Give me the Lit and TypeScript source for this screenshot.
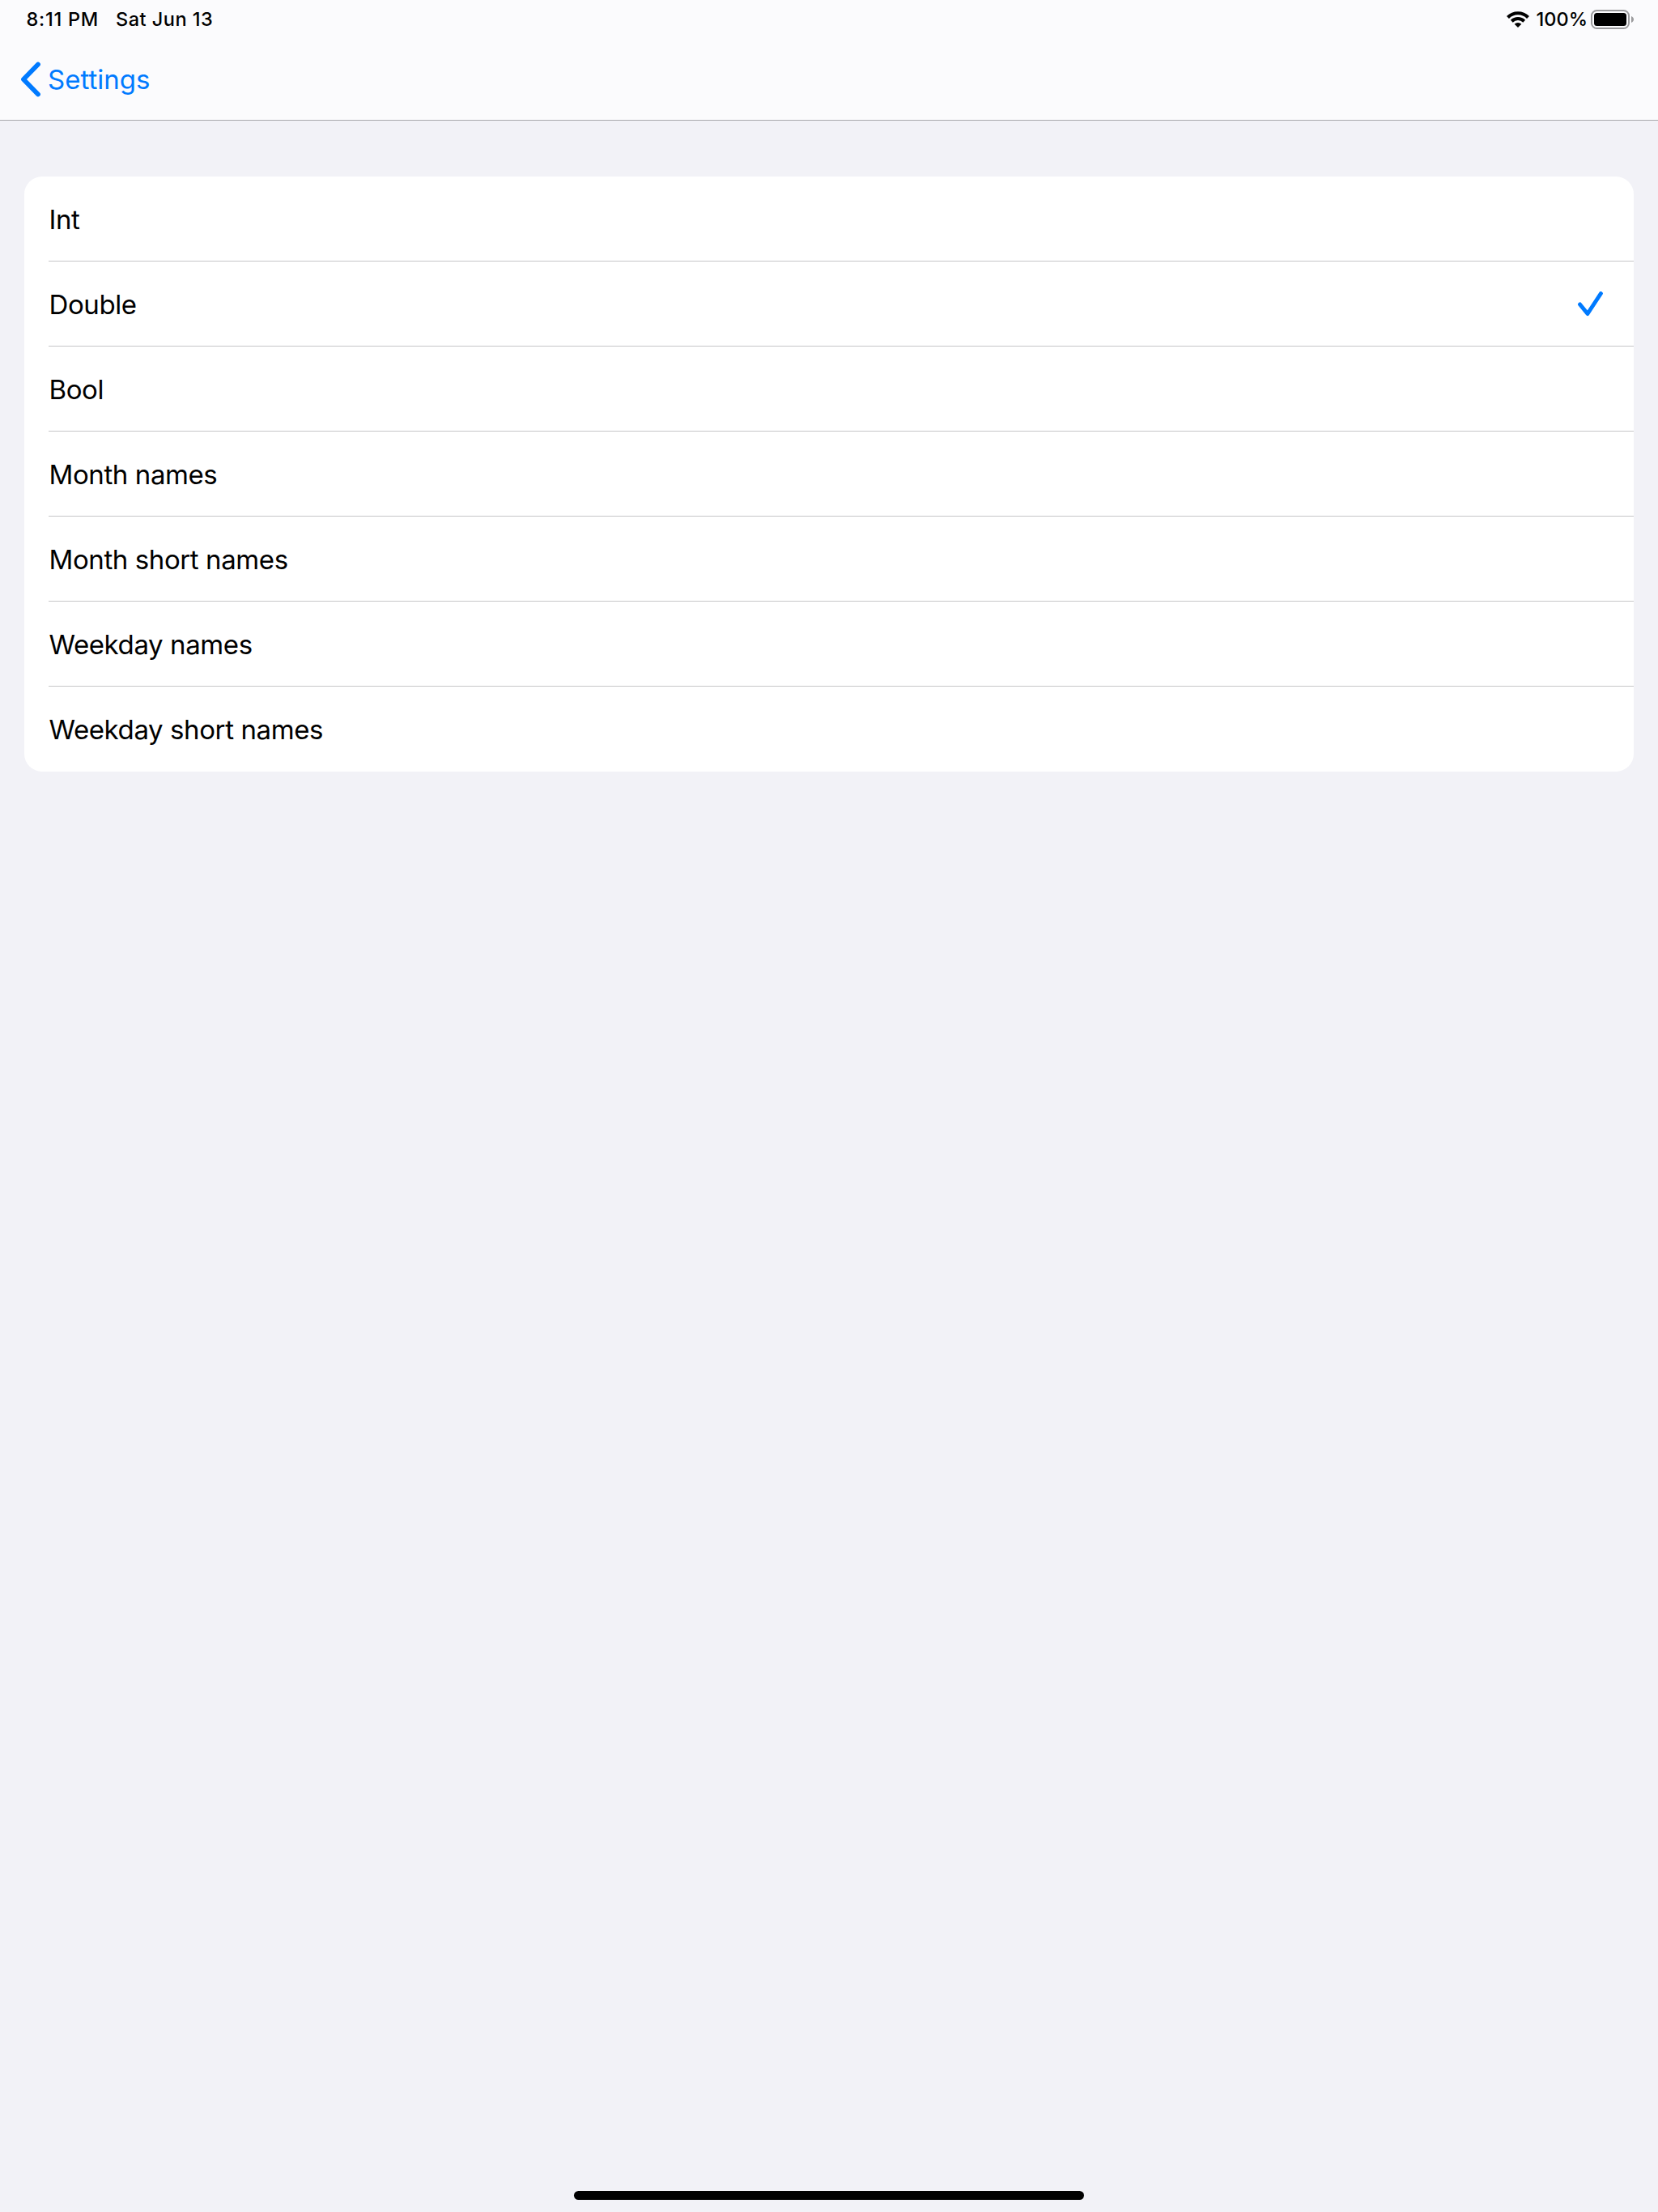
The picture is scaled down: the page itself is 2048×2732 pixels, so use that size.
import { LitElement, html, css, svg } from 'lit';
import { customElement, property, state } from 'lit/decorators.js';

@customElement('status-bar')
export class StatusBar extends LitElement {
  static styles = css`
    :host {
      display: flex;
      justify-content: space-between;
      align-items: center;
      height: 48px;
      padding: 0 30px 0 32.5px;
      box-sizing: border-box;
      font-size: 23.5px;
      font-weight: 500;
      color: #000;
    }

    .group {
      display: flex;
      align-items: center;
      white-space: nowrap;
    }

    span {
      padding-bottom: 2px;
    }

    .time {
      letter-spacing: 0.75px;
    }

    .date {
      margin-left: 21px;
      letter-spacing: 0.5px;
    }

    .percent {
      margin: 0 4px 0 9px;
    }

    svg {
      display: block;
    }
  `;

  render() {
    return html`
      <div class="group">
        <span class="time">8:11 PM</span>
        <span class="date">Sat Jun 13</span>
      </div>
      <div class="group">
        <svg width="28" height="20" viewBox="0 0 28 20">
          <path d="M1.5 7.4a17.8 17.8 0 0 1 25 0" fill="none" stroke="#000" stroke-width="4.2" />
          <path d="M6.3 12.2a11 11 0 0 1 15.4 0" fill="none" stroke="#000" stroke-width="4" />
          <path d="M14 20l-4.3-4.3a6.2 6.2 0 0 1 8.6 0z" />
        </svg>
        <span class="percent">100%</span>
        <svg width="53" height="24" viewBox="0 0 53 24">
          <rect x="1" y="1" width="46" height="22" rx="6.5" fill="none" stroke="#9b9b9d" stroke-width="2" />
          <rect x="4" y="4" width="40" height="16" rx="3.5" />
          <path d="M50 8c4 1.6 4 6.4 0 8z" fill="#9b9b9d" />
        </svg>
      </div>
    `;
  }
}

@customElement('option-row')
export class OptionRow extends LitElement {
  @property() label = '';
  @property({ type: Boolean }) selected = false;

  static styles = css`
    :host {
      display: block;
      padding-left: 30px;
      cursor: pointer;
    }

    .row {
      display: flex;
      align-items: center;
      justify-content: space-between;
      height: 105px;
      padding: 2px 37px 0 0.5px;
      box-sizing: border-box;
      border-bottom: 1px solid #c6c6c8;
      font-size: 33px;
      letter-spacing: -0.4px;
    }

    :host(:last-of-type) .row {
      border-bottom-color: transparent;
    }
  `;

  render() {
    const check = svg`
      <svg width="33" height="32" viewBox="0 0 33 32">
        <path d="M3.6 16l9.4 11.500L29.400 2.500" fill="none" stroke="#007aff" stroke-width="5"
          stroke-linecap="round" stroke-linejoin="round" />
      </svg>`;
    return html`
      <div class="row">
        <span>${this.label}</span>
        ${this.selected ? check : ''}
      </div>
    `;
  }
}

@customElement('app-root')
export class AppRoot extends LitElement {
  @state() selected = 'Double';

  options = [
    'Int',
    'Double',
    'Bool',
    'Month names',
    'Month short names',
    'Weekday names',
    'Weekday short names',
  ];

  static styles = css`
    :host {
      display: flex;
      flex-direction: column;
      height: 100vh;
      background: #f2f2f7;
      font-family: Inter, 'Liberation Sans', sans-serif;
      color: #000;
    }

    header {
      height: 149px;
      box-sizing: border-box;
      background: #fbfbfd;
      border-bottom: 1px solid #a9a9ac;
    }

    .back {
      display: flex;
      align-items: center;
      gap: 9px;
      height: 100px;
      padding-left: 24px;
      font-size: 33px;
      color: #007aff;
    }

    .list {
      margin: 69px 30px 0;
      background: #fff;
      border-radius: 22px;
      overflow: hidden;
    }

    .home {
      width: 630px;
      height: 11px;
      margin: auto auto 15px;
      border-radius: 6px;
      background: #000;
    }
  `;

  render() {
    return html`
      <header>
        <status-bar></status-bar>
        <div class="back">
          <svg width="26" height="44" viewBox="0 0 26 44">
            <path d="M23 3.5L5 22l18 18.5" fill="none" stroke="#007aff" stroke-width="5.8"
              stroke-linecap="round" stroke-linejoin="round" />
          </svg>
          <span>Settings</span>
        </div>
      </header>
      <div class="list">
        ${this.options.map(
          (option) => html`<option-row
            .label=${option}
            .selected=${option === this.selected}
            @click=${() => (this.selected = option)}
          ></option-row>`
        )}
      </div>
      <div class="home"></div>
    `;
  }
}
